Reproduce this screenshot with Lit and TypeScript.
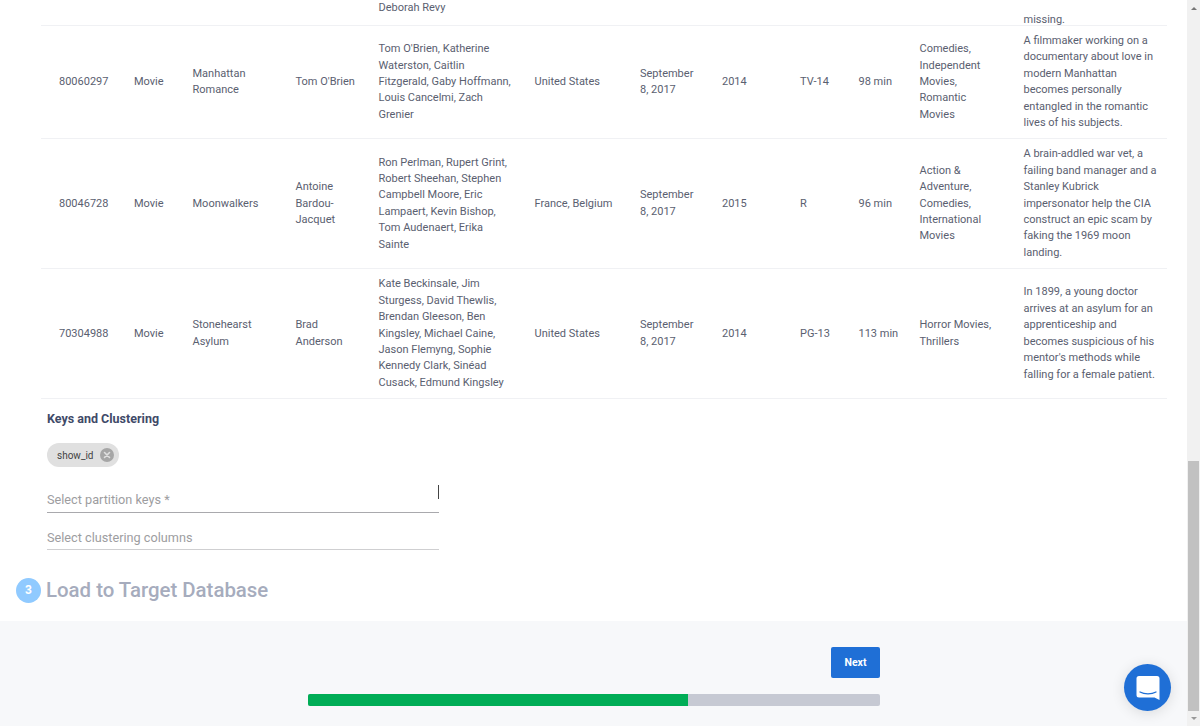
import { LitElement, css, html } from 'lit';
import { customElement } from 'lit/decorators.js';
import { map } from 'lit/directives/map.js';

const rows = [
  ['80060297', 'Movie', 'Manhattan Romance', "Tom O'Brien", "Tom O'Brien, Katherine Waterston, Caitlin Fitzgerald, Gaby Hoffmann, Louis Cancelmi, Zach Grenier", 'United States', 'September 8, 2017', '2014', 'TV-14', '98 min', 'Comedies, Independent Movies, Romantic Movies', 'A filmmaker working on a documentary about love in modern Manhattan becomes personally entangled in the romantic lives of his subjects.'],
  ['80046728', 'Movie', 'Moonwalkers', 'Antoine Bardou-Jacquet', 'Ron Perlman, Rupert Grint, Robert Sheehan, Stephen Campbell Moore, Eric Lampaert, Kevin Bishop, Tom Audenaert, Erika Sainte', 'France, Belgium', 'September 8, 2017', '2015', 'R', '96 min', 'Action & Adventure, Comedies, International Movies', 'A brain-addled war vet, a failing band manager and a Stanley Kubrick impersonator help the CIA construct an epic scam by faking the 1969 moon landing.'],
  ['70304988', 'Movie', 'Stonehearst Asylum', 'Brad Anderson', 'Kate Beckinsale, Jim Sturgess, David Thewlis, Brendan Gleeson, Ben Kingsley, Michael Caine, Jason Flemyng, Sophie Kennedy Clark, Sinéad Cusack, Edmund Kingsley', 'United States', 'September 8, 2017', '2014', 'PG-13', '113 min', 'Horror Movies, Thrillers', 'In 1899, a young doctor arrives at an asylum for an apprenticeship and becomes suspicious of his mentor\'s methods while falling for a female patient.'],
];

@customElement('app-root')
export class AppRoot extends LitElement {
  static styles = css`
    :host {
      display: flex;
      position: relative;
      height: 726px;
      overflow: hidden;
      font-family: Roboto, 'Liberation Sans', sans-serif;
      font-size: 11px;
      color: #5a6070;
      background: #fff;
    }

    .page {
      flex: 1;
      min-width: 0;
      display: flex;
      flex-direction: column;
    }

    .table {
      margin: 0 20px 0 41px;
    }

    .row {
      display: grid;
      grid-template-columns: 93px 58.5px 103px 83px 156px 105.5px 82px 78px 58.5px 61px 104px 143.5px;
      align-items: center;
      border-bottom: 1px solid #f0f1f4;
      line-height: 16.4px;
      padding: 7px 0;
    }

    .row.cut {
      height: 26px;
      box-sizing: border-box;
      padding: 0;
      overflow: hidden;
      align-items: end;
    }

    .cell {
      padding-right: 20px;
    }

    .cell:first-child {
      padding-left: 18px;
    }

    .cell:last-child {
      padding-right: 8px;
    }

    .cut .cast {
      grid-column: 5;
      padding-left: 0;
      padding-bottom: 19px;
    }

    .cut .desc {
      grid-column: 12;
      padding-bottom: 7px;
    }

    .keys {
      padding: 11px 0 0 47px;
      width: 392px;
    }

    h3 {
      margin: 0;
      font-size: 12.5px;
      line-height: 17px;
      font-weight: 700;
      color: #3f4a68;
    }

    .chip {
      display: inline-flex;
      align-items: center;
      gap: 7px;
      height: 24px;
      margin-top: 16px;
      padding: 0 5px 0 10px;
      border-radius: 12px;
      background: #e0e0e0;
      font-size: 10px;
      color: #444;
      vertical-align: top;
    }

    .chip svg {
      display: block;
    }

    .field {
      position: relative;
      box-sizing: border-box;
      height: 37px;
      padding-top: 17px;
      border-bottom: 1px solid #a9a9ad;
      font-size: 12.7px;
      line-height: 16px;
      color: #9d9d9f;
    }

    .field.first {
      margin-top: 9px;
      height: 37px;
      padding-top: 16px;
    }

    .field.soft {
      border-bottom-color: #cfcfd1;
    }

    .caret {
      position: absolute;
      right: 0;
      top: 9px;
      width: 1px;
      height: 14px;
      background: #444;
    }

    .step {
      display: flex;
      align-items: center;
      gap: 5px;
      margin: 27px 0 0 16px;
      height: 26px;
    }

    .num {
      width: 25px;
      height: 25px;
      border-radius: 50%;
      background: #90caff;
      color: #fff;
      font-size: 12px;
      font-weight: 700;
      display: flex;
      align-items: center;
      justify-content: center;
    }

    .step span {
      font-size: 20.4px;
      font-weight: 500;
      color: #a6acbd;
    }

    .footer {
      flex: 1;
      margin-top: 18px;
      background: #f7f8fa;
      padding: 26px 0 0 308px;
    }

    .actions {
      width: 572px;
      display: flex;
      flex-direction: column;
      align-items: flex-end;
      gap: 16px;
    }

    button {
      width: 49px;
      height: 31px;
      border: 0;
      border-radius: 2px;
      padding: 0;
      background: #1f6fd6;
      color: #fff;
      font: 700 10.5px Roboto, 'Liberation Sans', sans-serif;
    }

    .progress {
      width: 100%;
      height: 12px;
      border-radius: 2px;
      overflow: hidden;
      background: #c6c9d3;
    }

    .progress div {
      height: 100%;
      background: #00ad56;
    }

    .scrollbar {
      width: 13px;
      flex: none;
      background: #f1f1f1;
      display: flex;
      flex-direction: column;
      align-items: center;
    }

    .thumb {
      width: 11px;
      height: 250px;
      margin-top: 451px;
      background: #c1c1c1;
    }

    .arrow {
      width: 0;
      height: 0;
      border-left: 3px solid transparent;
      border-right: 3px solid transparent;
    }

    .arrow.up {
      margin-top: 7px;
      border-bottom: 3px solid #777;
    }

    .arrow.down {
      margin-top: 6px;
      border-top: 3px solid #999;
    }

    .chat {
      position: absolute;
      left: 1124px;
      top: 664px;
      width: 47px;
      height: 47px;
      border-radius: 50%;
      background: #1f6fd6;
      box-shadow: 0 2px 14px rgba(0, 0, 0, 0.12);
      display: flex;
      align-items: center;
      justify-content: center;
    }
  `;

  render() {
    return html`
      <div class="page">
        <div class="table">
          <div class="row cut">
            <div class="cell cast">Deborah Revy</div>
            <div class="cell desc">missing.</div>
          </div>
          ${map(
            rows,
            (row) => html`<div class="row">${map(row, (value) => html`<div class="cell">${value}</div>`)}</div>`,
          )}
        </div>
        <div class="keys">
          <h3>Keys and Clustering</h3>
          <div class="chip">
            show_id
            <svg width="14" height="14" viewBox="0 0 14 14">
              <circle cx="7" cy="7" r="7" fill="#a6a6a6" />
              <path d="M4.500 4.500l5 5M9.500 4.500l-5 5" stroke="#e0e0e0" stroke-width="1.600" stroke-linecap="round" />
            </svg>
          </div>
          <div class="field first">Select partition keys *<i class="caret"></i></div>
          <div class="field soft">Select clustering columns</div>
        </div>
        <div class="step">
          <div class="num">3</div>
          <span>Load to Target Database</span>
        </div>
        <div class="footer">
          <div class="actions">
            <button>Next</button>
            <div class="progress"><div style="width: ${(380 / 572) * 100}%"></div></div>
          </div>
        </div>
      </div>
      <div class="scrollbar">
        <div class="arrow up"></div>
        <div class="thumb"></div>
        <div class="arrow down"></div>
      </div>
      <div class="chat">
        <svg width="24" height="26" viewBox="0 0 24 26">
          <path d="M3 1h18a2.500 2.500 0 0 1 2.500 2.500V25l-5-2.500H3A2.500 2.500 0 0 1 .5 20V3.500A2.500 2.500 0 0 1 3 1z" fill="#fff" />
          <path d="M4 17c4.500 2.400 11.500 2.400 16 0" fill="none" stroke="#1f6fd6" stroke-width="1.300" stroke-linecap="round" />
        </svg>
      </div>
    `;
  }
}
